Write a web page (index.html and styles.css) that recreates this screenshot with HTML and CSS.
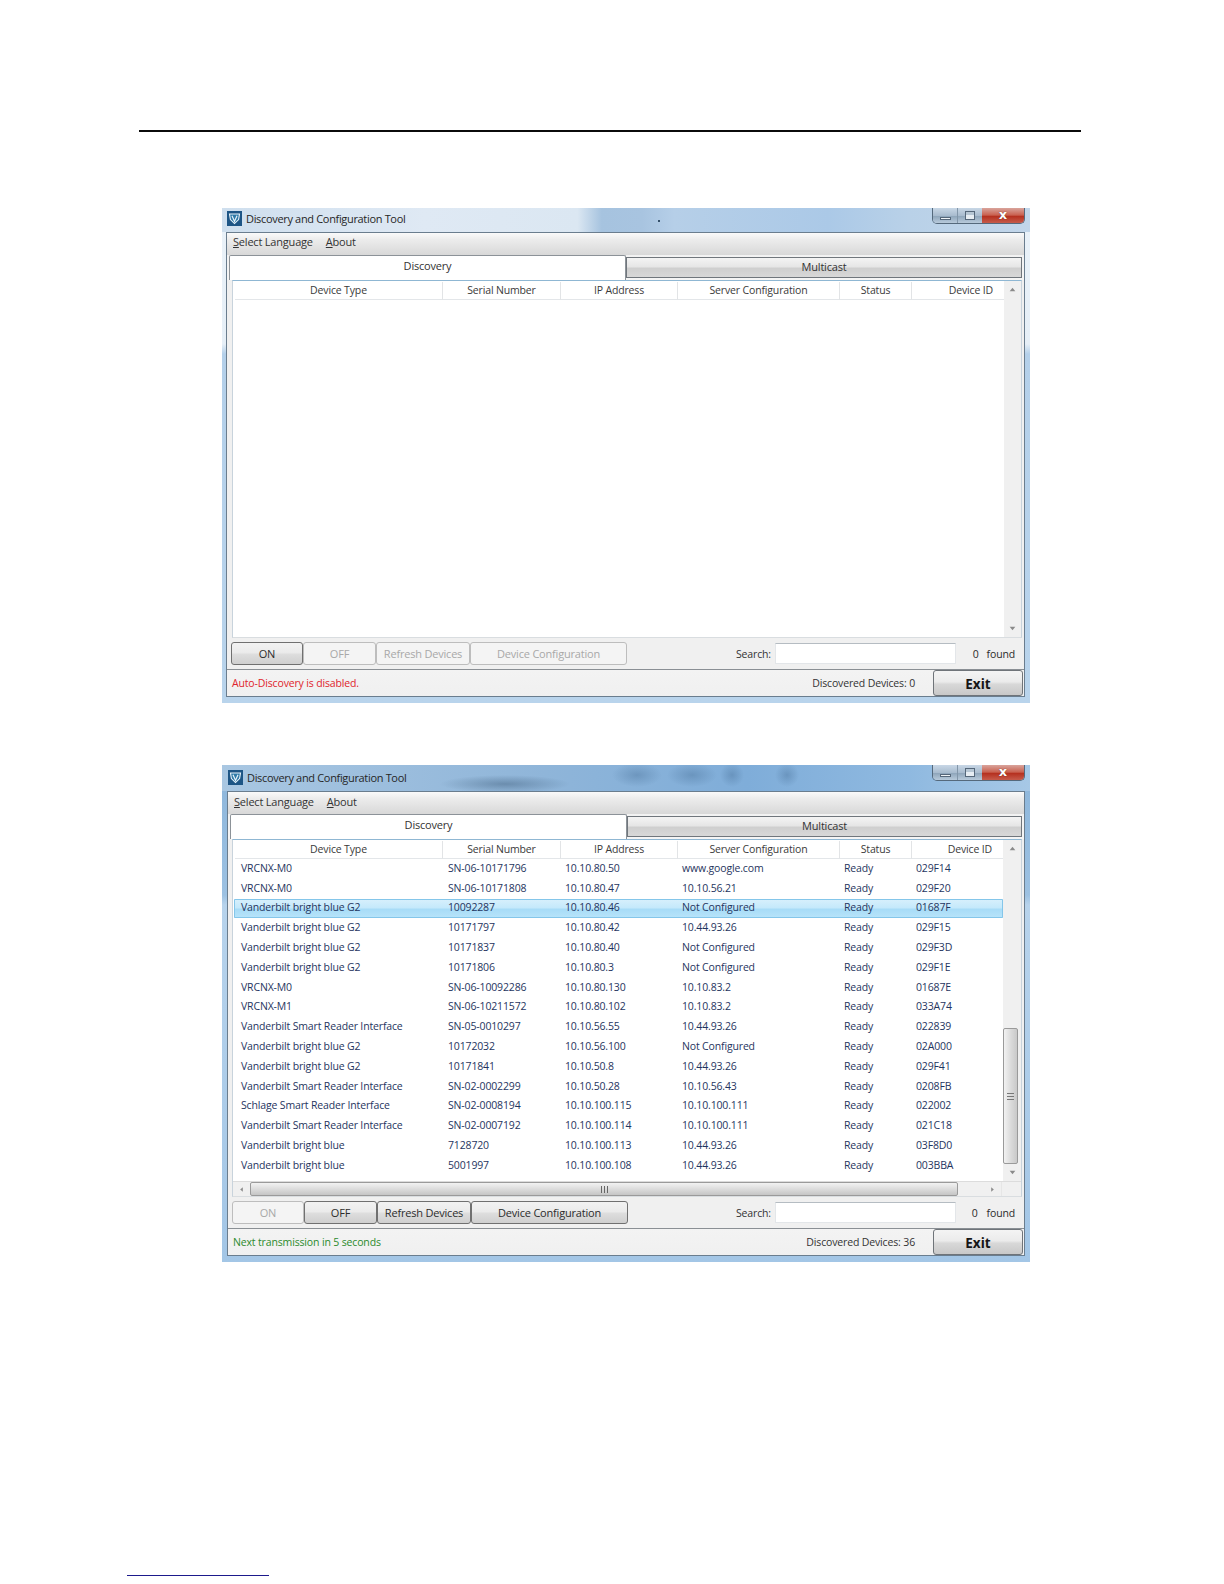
FILE: index.html
```html
<!DOCTYPE html>
<html lang="en">
<head>
<meta charset="utf-8">
<title>Discovery and Configuration Tool</title>
<link rel="stylesheet" href="styles.css">
</head>
<body>
<div class="page">
  <div class="rule"></div>

  <section class="win win-a">
    <header class="titlebar">
      <svg class="appicon" viewBox="0 0 15 15"><rect width="15" height="15" fill="#1d5585"/><path d="M2.500 3h10l-.9 5.600L7.500 12.600 3.400 8.600z" fill="#2f7aa8" stroke="#eaf4fb" stroke-width="1.100"/><path d="M5 4.800 7.500 10.400 10 4.800" fill="none" stroke="#eaf4fb" stroke-width="1.200"/></svg>
      <span class="title">Discovery and Configuration Tool</span>
      <span class="speck"></span>
      <div class="controls">
        <span class="ctl ctl-min"><i></i></span>
        <span class="ctl ctl-max"><i></i></span>
        <span class="ctl ctl-close">x</span>
      </div>
    </header>
    <div class="panel">
      <nav class="menu"><span><u>S</u>elect Language</span><span><u>A</u>bout</span></nav>
      <div class="tabs"><div class="tab tab-on">Discovery</div><div class="tab tab-off">Multicast</div></div>
      <div class="list">
        <div class="list-main">
          <div class="cols head">
            <span>Device Type</span><span>Serial Number</span><span>IP Address</span><span>Server Configuration</span><span>Status</span><span class="id-head">Device ID</span>
          </div>
        </div>
        <div class="vscroll">
          <svg class="arrow" viewBox="0 0 8 8"><path d="M4 2.500 6.500 5.500h-5z"/></svg>
          <div class="vspace"></div>
          <svg class="arrow" viewBox="0 0 8 8"><path d="M4 5.500 1.500 2.500h5z"/></svg>
        </div>
      </div>
      <div class="toolbar">
        <div class="btns">
          <button class="btn btn-on">ON</button>
          <button class="btn btn-off" disabled>OFF</button>
          <button class="btn btn-ref" disabled>Refresh Devices</button>
          <button class="btn btn-cfg" disabled>Device Configuration</button>
        </div>
        <label class="search-label">Search:</label>
        <div class="search"></div>
        <span class="count">0</span>
        <span class="found">found</span>
      </div>
      <footer class="statusbar">
        <span class="msg msg-red">Auto-Discovery is disabled.</span>
        <span class="devices">Discovered Devices: 0</span>
        <button class="exit">Exit</button>
      </footer>
    </div>
  </section>

  <section class="win win-b">
    <header class="titlebar">
      <svg class="appicon" viewBox="0 0 15 15"><rect width="15" height="15" fill="#1d5585"/><path d="M2.500 3h10l-.9 5.600L7.500 12.600 3.400 8.600z" fill="#2f7aa8" stroke="#eaf4fb" stroke-width="1.100"/><path d="M5 4.800 7.500 10.400 10 4.800" fill="none" stroke="#eaf4fb" stroke-width="1.200"/></svg>
      <span class="title">Discovery and Configuration Tool</span>
      <div class="controls">
        <span class="ctl ctl-min"><i></i></span>
        <span class="ctl ctl-max"><i></i></span>
        <span class="ctl ctl-close">x</span>
      </div>
    </header>
    <div class="panel">
      <nav class="menu"><span><u>S</u>elect Language</span><span><u>A</u>bout</span></nav>
      <div class="tabs"><div class="tab tab-on">Discovery</div><div class="tab tab-off">Multicast</div></div>
      <div class="list">
        <div class="list-top">
          <div class="list-main">
            <div class="cols head">
              <span>Device Type</span><span>Serial Number</span><span>IP Address</span><span>Server Configuration</span><span>Status</span><span class="id-head">Device ID</span>
            </div>
            <div class="rows">
              <div class="cols row"><span>VRCNX-M0</span><span>SN-06-10171796</span><span>10.10.80.50</span><span>www.google.com</span><span>Ready</span><span>029F14</span></div>
              <div class="cols row"><span>VRCNX-M0</span><span>SN-06-10171808</span><span>10.10.80.47</span><span>10.10.56.21</span><span>Ready</span><span>029F20</span></div>
              <div class="cols row row-sel"><span>Vanderbilt bright blue G2</span><span>10092287</span><span>10.10.80.46</span><span>Not Configured</span><span>Ready</span><span>01687F</span></div>
              <div class="cols row"><span>Vanderbilt bright blue G2</span><span>10171797</span><span>10.10.80.42</span><span>10.44.93.26</span><span>Ready</span><span>029F15</span></div>
              <div class="cols row"><span>Vanderbilt bright blue G2</span><span>10171837</span><span>10.10.80.40</span><span>Not Configured</span><span>Ready</span><span>029F3D</span></div>
              <div class="cols row"><span>Vanderbilt bright blue G2</span><span>10171806</span><span>10.10.80.3</span><span>Not Configured</span><span>Ready</span><span>029F1E</span></div>
              <div class="cols row"><span>VRCNX-M0</span><span>SN-06-10092286</span><span>10.10.80.130</span><span>10.10.83.2</span><span>Ready</span><span>01687E</span></div>
              <div class="cols row"><span>VRCNX-M1</span><span>SN-06-10211572</span><span>10.10.80.102</span><span>10.10.83.2</span><span>Ready</span><span>033A74</span></div>
              <div class="cols row"><span>Vanderbilt Smart Reader Interface</span><span>SN-05-0010297</span><span>10.10.56.55</span><span>10.44.93.26</span><span>Ready</span><span>022839</span></div>
              <div class="cols row"><span>Vanderbilt bright blue G2</span><span>10172032</span><span>10.10.56.100</span><span>Not Configured</span><span>Ready</span><span>02A000</span></div>
              <div class="cols row"><span>Vanderbilt bright blue G2</span><span>10171841</span><span>10.10.50.8</span><span>10.44.93.26</span><span>Ready</span><span>029F41</span></div>
              <div class="cols row"><span>Vanderbilt Smart Reader Interface</span><span>SN-02-0002299</span><span>10.10.50.28</span><span>10.10.56.43</span><span>Ready</span><span>0208FB</span></div>
              <div class="cols row"><span>Schlage Smart Reader Interface</span><span>SN-02-0008194</span><span>10.10.100.115</span><span>10.10.100.111</span><span>Ready</span><span>022002</span></div>
              <div class="cols row"><span>Vanderbilt Smart Reader Interface</span><span>SN-02-0007192</span><span>10.10.100.114</span><span>10.10.100.111</span><span>Ready</span><span>021C18</span></div>
              <div class="cols row"><span>Vanderbilt bright blue</span><span>7128720</span><span>10.10.100.113</span><span>10.44.93.26</span><span>Ready</span><span>03F8D0</span></div>
              <div class="cols row"><span>Vanderbilt bright blue</span><span>5001997</span><span>10.10.100.108</span><span>10.44.93.26</span><span>Ready</span><span>003BBA</span></div>
            </div>
          </div>
          <div class="vscroll">
            <svg class="arrow" viewBox="0 0 8 8"><path d="M4 2.500 6.500 5.500h-5z"/></svg>
            <div class="vspace vspace-thumb"><div class="vthumb"><b></b></div></div>
            <svg class="arrow" viewBox="0 0 8 8"><path d="M4 5.500 1.500 2.500h5z"/></svg>
          </div>
        </div>
        <div class="hscroll">
          <svg class="arrow" viewBox="0 0 8 8"><path d="M2.500 4 5.500 1.500v5z"/></svg>
          <div class="hthumb"><b></b></div>
          <svg class="arrow arrow-r" viewBox="0 0 8 8"><path d="M5.500 4 2.500 1.500v5z"/></svg>
          <div class="corner"></div>
        </div>
      </div>
      <div class="toolbar">
        <div class="btns">
          <button class="btn btn-on" disabled>ON</button>
          <button class="btn btn-off">OFF</button>
          <button class="btn btn-ref">Refresh Devices</button>
          <button class="btn btn-cfg">Device Configuration</button>
        </div>
        <label class="search-label">Search:</label>
        <div class="search"></div>
        <span class="count">0</span>
        <span class="found">found</span>
      </div>
      <footer class="statusbar">
        <span class="msg msg-green">Next transmission in 5 seconds</span>
        <span class="devices">Discovered Devices: 36</span>
        <button class="exit">Exit</button>
      </footer>
    </div>
  </section>

  <div class="footnote-rule"></div>
</div>
</body>
</html>
```
FILE: styles.css
```css
* { box-sizing: border-box; }
html, body { margin: 0; background: #fff; }
body { font-family: "Open Sans", "Noto Sans", "Liberation Sans", sans-serif; font-size: 10.500px; letter-spacing: -.15px; color: #2b2b2b; }
.page { padding-top: 130px; height: 1584px; overflow: hidden; }
.rule { height: 2px; width: 942px; margin-left: 139px; background: #0b0b0b; }

.win { width: 808px; margin-left: 222px; display: flex; flex-direction: column; padding: 0 5px 6px 4px; }
.win-a { margin-top: 76px; height: 495px; background: linear-gradient(180deg, #eaf2f9 0, #e6eff7 136px, #b4d0ea 146px, #b9d4ec 100%); }
.win-b { margin-top: 62px; height: 497px; padding-left: 5px; background: linear-gradient(180deg, #8db6db 0, #9cc1e2 130px, #b7d3ec 140px, #a3c6e6 100%); }

.titlebar { display: flex; align-items: center; position: relative; }
.win-a .titlebar { height: 24px; margin: 0 -5px 0 -4px; padding: 0 0 3px 5px; background: linear-gradient(90deg, #cfdfee 0, #dfe9f4 25%, #dbe7f2 44%, #a6c3df 47%, #a8c4e0 52%, #b6cfe8 56%, #abc9e7 75%, #b9d1e8 85%, #c2d6ea 100%); }
.win-b .titlebar { height: 26px; margin: 0 -5px 0 -5px; padding: 0 0 2px 6px; background:
  radial-gradient(ellipse 65px 9px at 283px 19px, rgba(60,90,120,.45), transparent),
  radial-gradient(ellipse 25px 12px at 415px 10px, rgba(70,110,150,.4), transparent),
  radial-gradient(ellipse 25px 12px at 470px 10px, rgba(70,110,150,.4), transparent),
  radial-gradient(ellipse 12px 12px at 510px 10px, rgba(70,110,150,.4), transparent),
  radial-gradient(ellipse 12px 12px at 565px 10px, rgba(70,110,150,.4), transparent),
  linear-gradient(90deg, #a9c7e2 0, #8fb5d9 40%, #7fadd9 65%, #8fb9e0 85%, #a7c8e6 100%); }
.appicon { width: 15px; height: 15px; flex: none; }
.title { margin-left: 4px; font-size: 11px; color: #262626; white-space: nowrap; letter-spacing: -.33px; }
.speck { position: absolute; left: 436px; top: 12px; width: 2px; height: 2px; background: #34506a; }
.controls { position: absolute; right: 5px; top: 0; width: 93px; height: 16px; display: flex; border: 1px solid #55697c; border-top: 0; border-radius: 0 0 5px 5px; overflow: hidden; }
.ctl { display: flex; align-items: center; justify-content: center; background: linear-gradient(180deg, #c8d7e6, #a9bccf 50%, #8fa6bb 55%, #b8cadb); }
.ctl-min { width: 25px; border-right: 1px solid #8296a9; }
.ctl-min i { width: 11px; height: 3px; margin-top: 6px; background: #eef3f7; border: 1px solid #56677a; }
.ctl-max { width: 24px; }
.ctl-max i { width: 10px; height: 9px; background: linear-gradient(180deg, #b6c6d4 0 3px, #e6edf3 3px); border: 1px solid #55677a; }
.ctl-close { flex: 1; color: #fff; font-family: "DejaVu Sans", sans-serif; font-weight: 700; font-size: 13px; letter-spacing: 0; line-height: 1; padding-bottom: 3px; text-shadow: 0 0 1px #5a1d14; background: linear-gradient(180deg, #d9a49c, #c9604f 48%, #b5301f 55%, #c65b4b); }

.panel { height: 465px; flex: none; display: flex; flex-direction: column; border: 1px solid #6a7d8e; background: #f0f0f0; }
.menu { height: 22px; flex: none; display: flex; align-items: center; gap: 13px; padding: 0 0 3px 6px; background: linear-gradient(180deg, #fafafa 0, #ececec 30%, #d8d8d8 100%); font-size: 11px; letter-spacing: -.2px; color: #333; }
.win-a .menu { padding-bottom: 5px; }
.menu span { white-space: nowrap; }

.tabs { height: 25px; flex: none; display: flex; padding: 0 2px 0 2px; background: linear-gradient(180deg, #f2f2f2, #f5f5f5); }
.tab { display: flex; align-items: center; justify-content: center; font-size: 11px; letter-spacing: -.2px; color: #333; }
.tab-on { width: 397px; height: 25px; background: #fff; border: 1px solid #8c9298; border-bottom: 0; border-radius: 2px 2px 0 0; padding-bottom: 5px; }
.tab-off { flex: 1; height: 21px; margin-top: 2px; padding-bottom: 2px; border: 1px solid #70767c; background: linear-gradient(180deg, #f4f4f4 0, #e6e6e6 45%, #cfcfcf 55%, #d8d8d8 100%); }

.list { height: 358px; flex: none; margin: 0 2px 0 5px; border: 1px solid #c8d3dc; border-top-color: #8fb7d3; border-bottom-color: #d9dde0; background: #fff; display: flex; }
.win-b .list { flex-direction: column; margin-left: 4px; }
.list-top { flex: 1; min-height: 0; display: flex; }
.list-main { flex: 1; min-width: 0; padding: 1px 0 0 1px; display: flex; flex-direction: column; }
.cols { display: grid; grid-template-columns: 208px 118px 117px 162px 72px 1fr; }
.cols span { white-space: nowrap; overflow: hidden; }
.head { height: 18px; flex: none; align-items: center; margin-left: 1px; border-bottom: 1px solid #e3e6e9; text-align: center; color: #3a3a3a; }
.head span { border-right: 1px solid #e2e4e6; height: 18px; line-height: 17px; }
.head span.id-head { border-right: 0; text-align: right; padding-right: 11px; }

.rows { flex: 1; display: flex; flex-direction: column; }
.row { height: 19.800px; flex: none; align-items: center; color: #1f3560; }
.row span { padding: 0 0 2px 5px; }
.row span:first-child { padding-left: 7px; }
.row span:nth-child(2) { padding-left: 6px; }
.row-sel { background: linear-gradient(180deg, #d8f0fc 0, #c5e9fb 45%, #a8dcf7 55%, #b8e4fa 100%); box-shadow: inset 0 0 0 1px #84c6ea; border-radius: 1px; }

.vscroll { width: 17px; flex: none; display: flex; flex-direction: column; align-items: center; background: #f0f0f0; }
.win-b .vscroll { width: 18px; }
.arrow { width: 17px; height: 17px; flex: none; padding: 4px; fill: #8a8a8a; }
.vspace { flex: 1; width: 100%; }
.vspace-thumb { display: flex; flex-direction: column; justify-content: flex-end; }
.vthumb { height: 136px; margin: 0 3px 0 0; border: 1px solid #9a9a9a; border-radius: 2px; background: linear-gradient(90deg, #f2f2f2, #dcdcdc 50%, #c9c9c9); display: flex; align-items: center; justify-content: center; }
.vthumb b { width: 7px; height: 7px; background: repeating-linear-gradient(180deg, #777 0 1px, transparent 1px 3px); }

.hscroll { height: 15px; flex: none; display: flex; align-items: center; background: #f0f0f0; border-top: 1px solid #dcdcdc; }
.hscroll > .arrow { width: 17px; height: 15px; padding: 4px; }
.hthumb { width: 708px; height: 14px; border: 1px solid #9a9a9a; border-radius: 2px; background: linear-gradient(180deg, #f2f2f2, #dcdcdc 50%, #c5c5c5); display: flex; align-items: center; justify-content: flex-end; padding-right: 349px; }
.hthumb b { width: 7px; height: 7px; background: repeating-linear-gradient(90deg, #666 0 1px, transparent 1px 3px); }
.hscroll > .arrow-r { margin-left: 26px; }
.corner { flex: 1; height: 100%; background: #f0f0f0; border-left: 1px solid #e6e6e6; }

.toolbar { height: 32px; flex: none; display: flex; align-items: center; padding: 0 9px 0 4px; border-bottom: 1px solid #8a8f94; background: #f0f0f0; }
.btns { display: flex; }
.btn { height: 23px; font: inherit; font-size: 11px; letter-spacing: -.2px; padding: 0; color: #2c2c2c; border: 1px solid #707070; border-radius: 3px; white-space: nowrap; background: linear-gradient(180deg, #f2f2f2 0, #ebebeb 45%, #dddddd 55%, #cfcfcf 100%); }
.btn:disabled { color: #a8a8a8; border-color: #bdbdbd; background: #f4f4f4; }
.btn-on { width: 72px; }
.btn-off { width: 73px; }
.btn-ref { width: 94px; }
.btn-cfg { width: 157px; }
.search-label { margin-left: 109px; width: 37px; color: #333; white-space: nowrap; }
.win-b .search-label { margin-left: 108px; }
.search { width: 181px; height: 21px; margin-left: 2px; background: #fff; border: 1px solid #e3e6e9; border-top-color: #b5bcc2; }
.count { margin-left: 17px; }
.found { margin-left: 8px; }
.win-b .count { margin-left: 16px; }
.win-b .found { margin-left: 9px; }

.statusbar { height: 26px; flex: none; display: flex; align-items: center; padding: 0 0 0 5px; background: linear-gradient(180deg, #f3f3f3, #f0f0f0); }
.msg { white-space: nowrap; }
.msg-red { color: #e0242c; }
.msg-green { color: #2b8a2b; }
.devices { margin-left: auto; color: #333; white-space: nowrap; }
.exit { width: 90px; height: 26px; margin-left: 18px; margin-right: 1px; font-family: "Open Sans", sans-serif; font-weight: 700; font-size: 13.500px; letter-spacing: 0; color: #161616; padding: 2px 0 0; border: 1px solid #6f7479; border-radius: 3px; background: linear-gradient(180deg, #f4f4f4 0, #ebebeb 45%, #d8d8d8 55%, #c8c8c8 100%); }

.footnote-rule { width: 142px; height: 1px; margin: 313px 0 0 127px; background: #1d1a8c; }
```
